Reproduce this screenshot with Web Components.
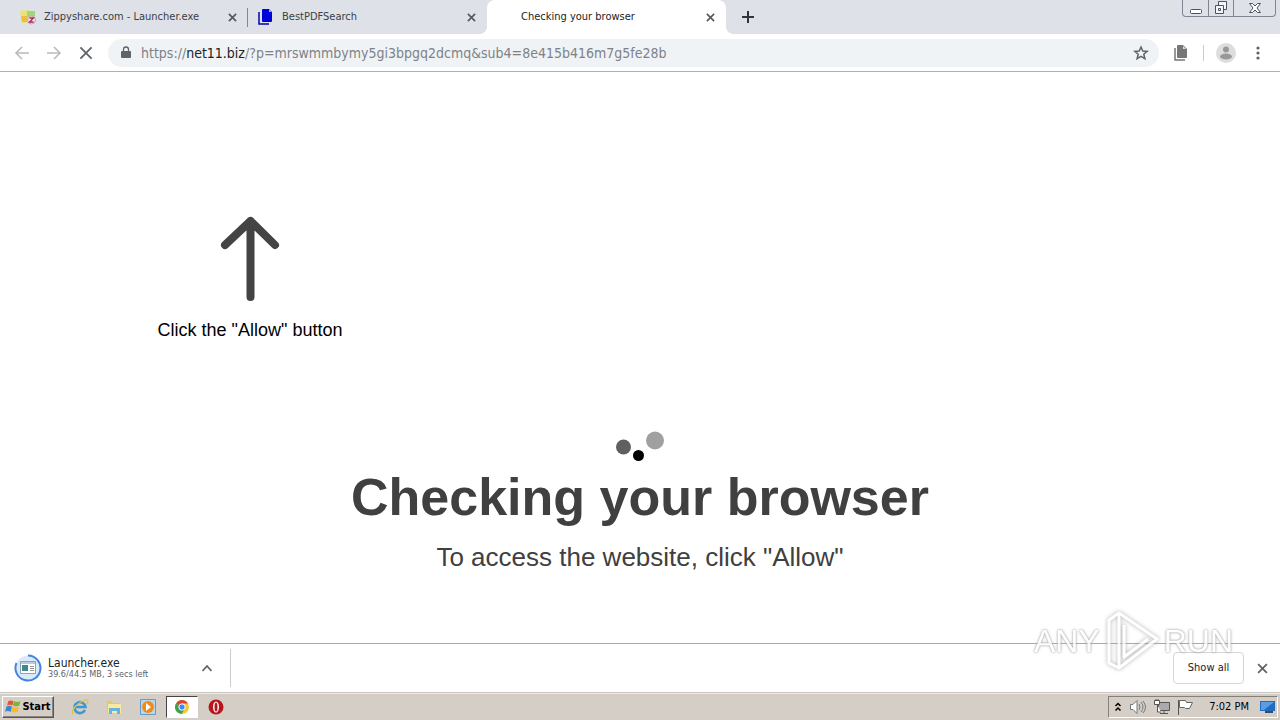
<!DOCTYPE html>
<html lang="en">
<head>
<meta charset="utf-8">
<title>Checking your browser</title>
<style>
	body {
		margin: 0;
		min-height: 100vh;
		display: flex;
		flex-direction: column;
		background: #fff;
		color: #222;
		font: 11px/16px "DejaVu Sans Condensed", "DejaVu Sans", sans-serif;
	}
	check-page {
		flex: 1;
	}
	svg {
		display: block;
	}
</style>
</head>
<body>
<tab-strip>
	<browser-tab label="Zippyshare.com - Launcher.exe">
		<svg slot="icon" width="16" height="16" viewBox="0 0 16 16"><path d="M0 2l5-1 8 1 2 3-1 8-12 1z" fill="#e9e27a"/><path d="M7 2h8v5l-8 1z" fill="#9bd77c"/><path d="M1 7h6v6H2z" fill="#edbd3f"/><circle cx="11.500" cy="11" r="4" fill="#f7dfe8" stroke="#c7a3b1"/><path d="M9.500 9h4l-4 4h4" fill="none" stroke="#a32a59" stroke-width="1.300"/></svg>
	</browser-tab>
	<browser-tab label="BestPDFSearch">
		<svg slot="icon" width="16" height="16" viewBox="0 0 16 16"><path d="M5 0h6l3 3v9q0 1-1 1H5q-1 0-1-1V1q0-1 1-1z" fill="#0000d8"/><path d="M11 0v3h3" fill="#9da4f5"/><path d="M1 3v12h10" fill="none" stroke="#0008a8" stroke-width="1.500"/></svg>
	</browser-tab>
	<browser-tab label="Checking your browser" active></browser-tab>
	<window-controls slot="end"></window-controls>
</tab-strip>
<tool-bar></tool-bar>
<check-page>
	<span slot="hint">Click the "Allow" button</span>
	<span slot="title">Checking your browser</span>
	<span slot="text">To access the website, click "Allow"</span>
</check-page>
<download-shelf>
	<span slot="name">Launcher.exe</span>
	<span slot="status">39.6/44.5 MB, 3 secs left</span>
</download-shelf>
<task-bar time="7:02 PM"></task-bar>
<water-mark></water-mark>

<script>
// rules that every shadow root needs
const base = `
	:host, * { box-sizing: border-box; }
	:host { display: block; }
	svg { display: block; flex: none; }
	button {
		display: flex;
		align-items: center;
		justify-content: center;
		margin: 0;
		padding: 0;
		border: 0;
		background: none;
		color: inherit;
		font: inherit;
	}`

function render($host, css, html){
	const shadow = $host.attachShadow({ mode: 'open' })
	shadow.innerHTML = `<style>${base}${css}</style>${html}`
	return shadow
}

const cross = (size, width = 2) => `
	<svg width="${size}" height="${size}" viewBox="0 0 10 10"><path d="M1 1l8 8M9 1l-8 8" fill="none" stroke="currentColor" stroke-width="${width}"/></svg>`


// === TABS ===

class TabStrip extends HTMLElement {
	connectedCallback(){
		render(this, `
			:host {
				display: flex;
				height: 34px;
				background: #dee1e8;
			}
			.add {
				width: 28px;
				height: 34px;
				margin-left: 8px;
				color: #30343b;
			}
			.end { margin-left: auto; }
		`, `
			<slot></slot>
			<button class="add" aria-label="New tab">
				<svg width="12" height="12" viewBox="0 0 12 12"><path d="M6 0v12M0 6h12" stroke="currentColor" stroke-width="2"/></svg>
			</button>
			<div class="end"><slot name="end"></slot></div>
		`)
	}
}

class BrowserTab extends HTMLElement {
	connectedCallback(){
		render(this, `
			:host {
				display: flex;
				align-items: center;
				position: relative;
				width: 239px;
				height: 34px;
				padding: 0 8px 0 20px;
				color: #3c4043;
			}
			:host(:first-child) { width: 248px; }
			:host(:first-child)::after {
				content: "";
				position: absolute;
				right: 0;
				top: 8px;
				width: 1px;
				height: 19px;
				background: #82868e;
			}
			:host(:not(:first-child)) { padding-left: 10px; }
			:host([active]) {
				border-radius: 8px 8px 0 0;
				background: #fff;
				color: #222;
			}
			:host([active])::before,
			:host([active])::after {
				content: "";
				position: absolute;
				bottom: 0;
				width: 8px;
				height: 8px;
			}
			:host([active])::before {
				right: 100%;
				background: radial-gradient(circle at 0 0, transparent 8px, #fff 8px);
			}
			:host([active])::after {
				left: 100%;
				background: radial-gradient(circle at 100% 0, transparent 8px, #fff 8px);
			}
			.icon { width: 16px; margin-right: 8px; }
			.label { flex: 1; white-space: nowrap; }
			button { width: 16px; height: 16px; color: #54585e; }
		`, `
			<span class="icon"><slot name="icon"></slot></span>
			<span class="label">${this.getAttribute('label')}</span>
			<button aria-label="Close tab">${cross(9, 1.8)}</button>
		`)
	}
}

class WindowControls extends HTMLElement {
	connectedCallback(){
		render(this, `
			:host {
				display: flex;
				height: 17px;
				margin-right: 4px;
				border: 1px solid #7f8590;
				border-top: 0;
				border-radius: 0 0 4px 4px;
			}
			button { width: 25px; color: #4c5260; }
			button + button { border-left: 1px solid #7f8590; }
			button:last-child { width: 42px; }
		`, `
			<button aria-label="Minimize"><svg width="14" height="14" viewBox="0 0 14 14"><rect x="1.500" y="8.500" width="11" height="4" rx="1" fill="#fff" stroke="currentColor"/></svg></button>
			<button aria-label="Restore"><svg width="14" height="14" viewBox="0 0 14 14"><g fill="#f4f5f8" stroke="currentColor"><path d="M4.500.5h8v8h-8z"/><path d="M1.500 4.500h8v8h-8z"/><path d="M4.500 7.500h2v2h-2z"/></g></svg></button>
			<button aria-label="Close"><svg width="14" height="14" viewBox="0 0 14 14"><path d="M1.500 2.500h3L7 5l2.500-2.500h3L9 7l3.500 4.500h-3L7 9l-2.500 2.500h-3L5 7z" fill="#fff" stroke="currentColor"/></svg></button>
		`)
	}
}


// === TOOLBAR ===

class ToolBar extends HTMLElement {
	connectedCallback(){
		render(this, `
			:host {
				display: flex;
				align-items: center;
				height: 38px;
				padding: 0 8px;
				border-bottom: 1px solid #aeb1b0;
				background: #fff;
				color: #5f6368;
			}
			button { width: 28px; height: 28px; }
			.nav { display: flex; gap: 4px; }
			.nav button:not(:last-child) { color: #b9bbbe; }
			.address {
				display: flex;
				align-items: center;
				flex: 1;
				height: 28px;
				margin: 0 8px;
				padding: 0 4px 0 12px;
				border-radius: 14px;
				background: #f0f3f5;
				font-size: 14px;
			}
			.url {
				flex: 1;
				margin-left: 9px;
				color: #7d8288;
				text-decoration: none;
				white-space: nowrap;
			}
			b { color: #222; font-weight: normal; }
			.line { width: 1px; height: 16px; margin: 0 8px; background: #ccc; }
			.menu { margin-left: 4px; }
		`, `
			<div class="nav">
				<button aria-label="Back"><svg width="16" height="16" viewBox="0 0 16 16"><path d="M15 8H2M8 2L2 8l6 6" fill="none" stroke="currentColor" stroke-width="1.600"/></svg></button>
				<button aria-label="Forward"><svg width="16" height="16" viewBox="0 0 16 16"><path d="M1 8h13M8 2l6 6-6 6" fill="none" stroke="currentColor" stroke-width="1.600"/></svg></button>
				<button aria-label="Stop">${cross(14, 1.3)}</button>
			</div>
			<div class="address">
				<svg width="12" height="14" viewBox="0 0 12 14"><path d="M2 5h8q1 0 1 1v5q0 1-1 1H2q-1 0-1-1V6q0-1 1-1z" fill="currentColor"/><path d="M3.500 6V3.500a2.500 2.500 0 015 0V6" fill="none" stroke="currentColor" stroke-width="1.300"/></svg>
				<a class="url" href="#">https://<b>net11.biz</b>/?p=mrswmmbymy5gi3bpgq2dcmq&amp;sub4=8e415b416m7g5fe28b</a>
				<button aria-label="Bookmark this page"><svg width="16" height="16" viewBox="0 0 16 16"><path d="M8 2l1.800 4 4.400.4-3.400 2.900 1.100 4.300L8 11.300l-3.900 2.300 1.100-4.300-3.400-2.900L6.200 6z" fill="none" stroke="currentColor" stroke-width="1.500"/></svg></button>
			</div>
			<button aria-label="PDF search"><svg width="16" height="16" viewBox="0 0 16 16"><path d="M5 0h5l4 4v8q0 1-1 1H5q-1 0-1-1V1q0-1 1-1z" fill="#777"/><path d="M10 1v3h3" fill="#ddd"/><path d="M2 3v12h10" fill="none" stroke="#777" stroke-width="1.500"/></svg></button>
			<span class="line"></span>
			<button aria-label="Profile"><svg width="20" height="20" viewBox="0 0 20 20"><circle cx="10" cy="10" r="10" fill="#ddd"/><circle cx="10" cy="6.500" r="3" fill="#999"/><ellipse cx="10" cy="13.500" rx="6" ry="3" fill="#999"/></svg></button>
			<button class="menu" aria-label="Menu"><svg width="4" height="14" viewBox="0 0 4 14"><g fill="currentColor"><circle cx="2" cy="2" r="1.600"/><circle cx="2" cy="7" r="1.600"/><circle cx="2" cy="12" r="1.600"/></g></svg></button>
		`)
	}
}


// === PAGE ===

class CheckPage extends HTMLElement {
	connectedCallback(){
		render(this, `
			:host {
				color: #404040;
				font-family: "Liberation Sans", Arial, sans-serif;
			}
			.hint {
				display: flex;
				flex-direction: column;
				align-items: center;
				width: 500px;
				padding-top: 144px;
			}
			p { margin: 0; }
			.hint p {
				margin-top: 16px;
				color: #000;
				font-size: 18px;
				line-height: 24px;
			}
			.check {
				display: flex;
				flex-direction: column;
				align-items: center;
				padding-top: 89px;
			}
			h1 {
				margin: 2px 0 12px;
				font-size: 52px;
				line-height: 64px;
			}
			.check p { font-size: 26px; line-height: 32px; }
		`, `
			<div class="hint">
				<svg width="60" height="86" viewBox="0 0 60 86"><path d="M30.500 81V5M5 29L30.500 5 55 29" fill="none" stroke="#444" stroke-width="8" stroke-linecap="round" stroke-linejoin="round"/></svg>
				<p><slot name="hint"></slot></p>
			</div>
			<div class="check">
				<svg width="48" height="32" viewBox="0 0 48 32"><circle cx="7.500" cy="16" r="7.500" fill="#606060"/><circle cx="22.500" cy="24.500" r="5.500" fill="#000"/><circle cx="39" cy="9.500" r="9" fill="#a0a0a0"/></svg>
				<h1><slot name="title"></slot></h1>
				<p><slot name="text"></slot></p>
			</div>
		`)
	}
}


// === DOWNLOADS ===

class DownloadShelf extends HTMLElement {
	connectedCallback(){
		render(this, `
			:host {
				display: flex;
				align-items: center;
				height: 49px;
				padding-right: 8px;
				border-top: 1px solid #aaa;
				background: #fff;
			}
			.item {
				display: flex;
				align-items: center;
				width: 231px;
				height: 38px;
				padding: 0 13px 0 14px;
				border-right: 1px solid #ccc;
			}
			.text { flex: 1; margin-left: 6px; white-space: nowrap; }
			.name { font-size: 12px; line-height: 12px; }
			.status { color: #5f6368; font-size: 9px; line-height: 10px; }
			button { width: 20px; height: 20px; color: #5f6368; }
			.all {
				width: 71px;
				height: 32px;
				margin: 0 8px 0 auto;
				border: 1px solid #d4d6d9;
				border-radius: 4px;
				color: #222;
			}
		`, `
			<div class="item">
				<svg width="28" height="28" viewBox="0 0 28 28"><circle cx="14" cy="14" r="12.500" fill="#dce9fa"/><path d="M14 1.500A12.500 12.500 0 112.500 9" fill="none" stroke="#4285e0" stroke-width="2"/><path d="M6.500 7.500h15v12h-15z" fill="#fff" stroke="#8fa1b5"/><path d="M7 8h14v2H7z" fill="#b8cbe2"/><path d="M8 11h6v6H8z" fill="#3f8a86"/><path d="M16 12.500h4M16 14.500h4M16 16.500h4" stroke="#999"/></svg>
				<div class="text">
					<div class="name"><slot name="name"></slot></div>
					<div class="status"><slot name="status"></slot></div>
				</div>
				<button aria-label="Download options"><svg width="10" height="10" viewBox="0 0 10 10"><path d="M.5 8L5 3l4.500 5" fill="none" stroke="currentColor" stroke-width="1.800"/></svg></button>
			</div>
			<button class="all">Show all</button>
			<button aria-label="Close downloads">${cross(11, 1.6)}</button>
		`)
	}
}


// === TASKBAR ===

class TaskBar extends HTMLElement {
	connectedCallback(){
		render(this, `
			:host {
				display: flex;
				align-items: center;
				height: 28px;
				padding: 0 2px;
				border-top: 1px solid #c9c6c0;
				box-shadow: inset 0 1px #eeeae5;
				background: #d5cec6;
				color: #000;
			}
			.start {
				width: 52px;
				height: 22px;
				margin-right: 10px;
				border: 1px solid;
				border-color: #fff #555 #555 #fff;
				box-shadow: inset -1px -1px #8b8680;
				font-weight: bold;
			}
			.app { width: 32px; height: 22px; margin-right: 2px; }
			.app.on {
				border: 1px solid;
				border-color: #444 #fff #fff #444;
				background: #fff;
			}
			.tray {
				display: flex;
				align-items: center;
				gap: 7px;
				height: 22px;
				margin-left: auto;
				padding: 0 1px 0 5px;
				border: 1px solid;
				border-color: #85807a #fff #fff #85807a;
			}
			time { margin: 0 4px 0 9px; white-space: nowrap; }
		`, `
			<button class="start">
				<svg width="17" height="17" viewBox="0 0 16 16"><path d="M3 3c2-1 3-1 5 0L7 7C5 6 4 6 2 7z" fill="#e8562c"/><path d="M8.500 3c2 1 4 1 6 0l-1 4c-2 1-4 1-6 0z" fill="#79b63c"/><path d="M1.500 8c2-1 3-1 5 0l-1 5c-2-1-4-1-5.500 0z" fill="#3b86d1"/><path d="M7 8c2 1 4 1 6 0l-1 5c-2 1-4 1-6 0z" fill="#f5bd2e"/></svg>Start
			</button>
			<button class="app" aria-label="Internet Explorer"><svg width="18" height="18" viewBox="0 0 18 18"><path d="M14 12a5.500 5.500 0 11.500-3H4" fill="none" stroke="#3999d8" stroke-width="2.600"/><path d="M2 16C-1 12 8 4 14 2c4-1 3 2 2 4" fill="none" stroke="#e8bd43" stroke-width="1.300"/></svg></button>
			<button class="app" aria-label="Explorer"><svg width="18" height="18" viewBox="0 0 18 18"><path d="M2 3h5l1 2h8v10H2z" fill="#e7c85d"/><path d="M3 6h13v9H3z" fill="#f8e9a0"/><path d="M4 16v-6h11v6h-3v-3H7v3z" fill="#65b3df"/></svg></button>
			<button class="app" aria-label="Media Player"><svg width="18" height="18" viewBox="0 0 18 18"><path d="M1.500 1.500h15v15h-15z" fill="#b7d7ef" stroke="#6799c4"/><circle cx="9" cy="9" r="6" fill="#f18a1d"/><path d="M7 5l5 4-5 4z" fill="#fff"/></svg></button>
			<button class="app on" aria-label="Chrome"><svg width="14" height="14" viewBox="0 0 14 14"><circle cx="7" cy="7" r="7" fill="#f6c92f"/><path d="M7 7L1 3.400A7 7 0 0113 3.500H7z" fill="#db4437"/><path d="M1 3.400A7 7 0 006.500 14L10 8.500 7 7z" fill="#3da154"/><circle cx="7" cy="7" r="3.200" fill="#4285f4" stroke="#fff"/></svg></button>
			<button class="app" aria-label="Opera"><svg width="16" height="16" viewBox="0 0 16 16"><circle cx="8" cy="8" r="7.500" fill="#b8151c"/><ellipse cx="8" cy="8" rx="3" ry="5.500" fill="#fff"/><ellipse cx="8" cy="8" rx="1.500" ry="4.500" fill="#b8151c"/></svg></button>
			<div class="tray">
				<svg width="8" height="10" viewBox="0 0 8 10"><path d="M1.500 4L4 1.500 6.500 4M1.500 8.500L4 6l2.500 2.500" fill="none" stroke="#000" stroke-width="1.500"/></svg>
				<svg width="18" height="16" viewBox="0 0 18 16"><path d="M1.500 5.500H4l4-4v13l-4-4H1.500z" fill="#fff" stroke="#777"/><path d="M10 5q2 3 0 6M12 3q4 5 0 10M14 2q5 6 0 12" fill="none" stroke="#777"/></svg>
				<svg width="16" height="16" viewBox="0 0 16 16"><path d="M4.500 3.500h11v8h-11z" fill="#aaa" stroke="#555"/><path d="M6 14.500h8M10 12v2" stroke="#555"/><path d="M.5 1.500h5v4h-5zM3.500 6v7H7M2 0v2M4 0v2" fill="#fff" stroke="#555"/></svg>
				<svg width="16" height="16" viewBox="0 0 16 16"><path d="M1.500 1v15" stroke="#555"/><path d="M2.500 1.500h6l1 2h6l-3 6h-4l-1-1h-5z" fill="#fff" stroke="#666"/></svg>
				<time>${this.getAttribute('time')}</time>
				<svg width="16" height="14" viewBox="0 0 16 14"><path d="M0 1h15v10H0z" fill="#236bc0"/><path d="M1 2h13L4 10H1z" fill="#589ee0"/><path d="M5 12h8" stroke="#334d70" stroke-width="2"/></svg>
			</div>
		`)
	}
}


// === WATERMARK ===

class WaterMark extends HTMLElement {
	connectedCallback(){
		render(this, `
			:host {
				position: fixed;
				right: 47px;
				bottom: 47px;
				display: flex;
				align-items: center;
				gap: 4px;
				color: #fff;
				font: 32px/32px "Liberation Sans", Arial, sans-serif;
				text-shadow: 0 0 3px #999, 0 0 2px #aaa;
				opacity: .8;
				pointer-events: none;
			}
			svg { filter: drop-shadow(0 0 2px #999); }
		`, `
			<span>ANY</span>
			<svg width="56" height="64" viewBox="0 0 56 64"><g fill="none" stroke="#fff" stroke-width="3" stroke-linejoin="round"><path d="M15 4l38 26-38 29z"/><path d="M15 4L5 11v43l10 5M20 16v32l24-18"/></g></svg>
			<span>RUN</span>
		`)
	}
}

customElements.define('tab-strip', TabStrip)
customElements.define('browser-tab', BrowserTab)
customElements.define('window-controls', WindowControls)
customElements.define('tool-bar', ToolBar)
customElements.define('check-page', CheckPage)
customElements.define('download-shelf', DownloadShelf)
customElements.define('task-bar', TaskBar)
customElements.define('water-mark', WaterMark)
</script>
</body>
</html>
